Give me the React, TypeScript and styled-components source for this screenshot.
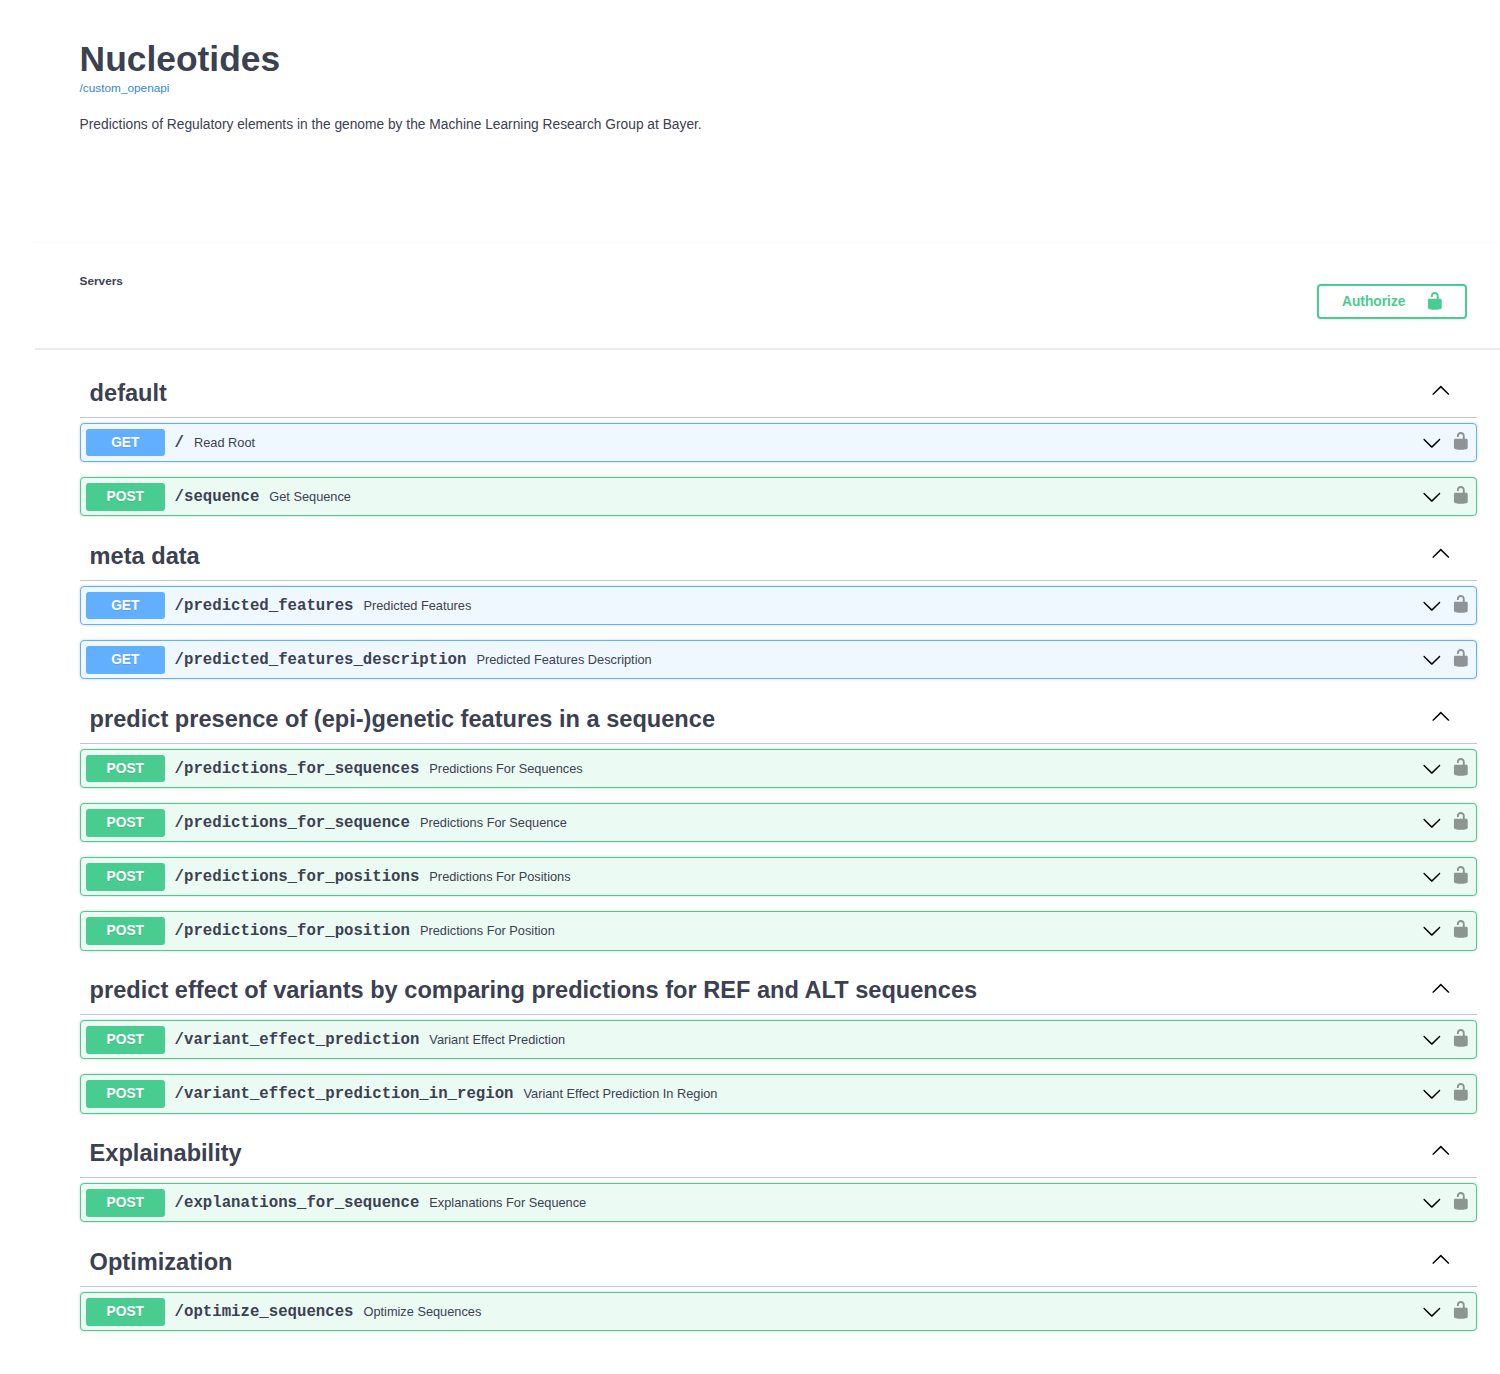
import React from "react";
import styled, { createGlobalStyle } from "styled-components";

const sans = `"Liberation Sans", Arial, Helvetica, sans-serif`;
const mono = `"Liberation Mono", "Courier New", monospace`;

const GlobalStyle = createGlobalStyle`
  *, *::before, *::after { box-sizing: border-box; }
  body { margin: 0; background: #fff; color: #3b4151; font-family: ${sans}; }
  h1, h2, p { margin: 0; }
`;

const Page = styled.main`
  height: 1374px;
  padding-left: 35px;
  overflow: hidden;
`;

const Info = styled.header`
  height: 242px;
  padding: 38px 0 0 44.6px;
  display: flex;
  flex-direction: column;
  align-items: flex-start;
`;

const Title = styled.h1`
  font-size: 35.4px;
  line-height: 42px;
  font-weight: 700;
`;

const SpecLink = styled.a`
  margin-top: 1px;
  color: #3486dd;
  font-size: 11.8px;
  line-height: 15px;
`;

const Description = styled.p`
  margin-top: 20px;
  font-size: 13.77px;
  line-height: 17px;
`;

const Schemes = styled.section`
  height: 108px;
  padding: 30px 33px 0 44.6px;
  display: flex;
  justify-content: space-between;
  align-items: flex-start;
  border-top: 1px solid #fafafa;
  border-bottom: 2px solid #ebebeb;
`;

const ServersLabel = styled.span`
  font-size: 11.8px;
  line-height: 16px;
  font-weight: 700;
`;

const AuthorizeButton = styled.button`
  width: 150px;
  height: 35.5px;
  margin-top: 10.5px;
  padding: 0 20px 0 23px;
  display: flex;
  align-items: center;
  justify-content: space-between;
  border: 2px solid #49cc90;
  border-radius: 4px;
  background: transparent;
  box-shadow: 0 1px 2px rgba(0, 0, 0, 0.1);
  color: #49cc90;
  font: 700 13.76px ${sans};
`;

const Sections = styled.div`
  padding: 13px 23px 0 45px;
`;

const SectionHead = styled.div`
  height: 54.8px;
  padding: 5.6px 26.1px 0 9.6px;
  display: flex;
  align-items: center;
  justify-content: space-between;
  border-bottom: 1px solid rgba(59, 65, 81, 0.3);
`;

const SectionTitle = styled.h2`
  font-size: 23.6px;
  line-height: 30px;
  font-weight: 700;
`;

const Rows = styled.div`
  padding-top: 5px;
  margin-bottom: -5px;
`;

type Method = "GET" | "POST";

const palette = {
  GET: { solid: "#61affe", tint: "#eff7ff" },
  POST: { solid: "#49cc90", tint: "#ebfaf3" },
};

const Row = styled.div<{ $method: Method }>`
  height: 39.5px;
  margin-bottom: 14.6px;
  padding: 0.3px 5.2px 0 5px;
  display: flex;
  align-items: center;
  border: 1px solid ${(p) => palette[p.$method].solid};
  border-radius: 4px;
  background: ${(p) => palette[p.$method].tint};
  box-shadow: 0 0 3px rgba(0, 0, 0, 0.19);
`;

const Badge = styled.span<{ $method: Method }>`
  width: 78.6px;
  height: 27.6px;
  border-radius: 3px;
  background: ${(p) => palette[p.$method].solid};
  color: #fff;
  font-size: 13.76px;
  line-height: 28px;
  font-weight: 700;
  text-align: center;
  text-shadow: 0 1px 0 rgba(0, 0, 0, 0.1);
`;

const Path = styled.span`
  margin-left: 10px;
  padding-top: 1px;
  font: 700 15.69px/20px ${mono};
`;

const Summary = styled.span`
  flex: 1;
  margin-left: 10px;
  padding-top: 0.6px;
  font-size: 12.78px;
  line-height: 16px;
`;

const Icon = styled.svg<{ $lift?: number }>`
  width: 19.66px;
  height: 19.66px;
  flex: none;
  margin-bottom: ${(p) => p.$lift ?? 0}px;
`;

const RowIcons = styled.span`
  display: flex;
  align-items: center;
  gap: 10px;
`;

const Up = () => (
  <Icon viewBox="0 0 20 20" $lift={5}>
    <path d="M17.418 14.908c.272.268.709.268.979 0s.271-.701 0-.969l-7.908-7.83c-.27-.268-.707-.268-.979 0l-7.908 7.83c-.27.268-.27.701 0 .969.271.268.709.268.979 0L10 7.767l7.418 7.141z" />
  </Icon>
);

const Down = () => (
  <Icon viewBox="0 0 20 20">
    <path d="M17.418 6.109c.272-.268.709-.268.979 0s.271.701 0 .969l-7.908 7.83c-.27.268-.707.268-.979 0l-7.908-7.83c-.27-.268-.27-.701 0-.969.271-.268.709-.268.979 0L10 13.25l7.418-7.141z" />
  </Icon>
);

const Unlock = ({ lift, faded }: { lift: number; faded?: boolean }) => (
  <Icon viewBox="0 0 20 20" $lift={lift} fill={faded ? "#000" : "#49cc90"} opacity={faded ? 0.4 : 1}>
    <path d="M15.8 8H14V5.6C14 2.703 12.665 1 10 1 7.334 1 6 2.703 6 5.6V6h2v-.801C8 3.754 8.797 3 10 3c1.203 0 2 .754 2 2.199V8H4c-.553 0-1 .646-1 1.199V17c0 .549.428 1.139.951 1.307l1.197.387C5.672 18.861 6.55 19 7.1 19h5.8c.549 0 1.428-.139 1.951-.307l1.196-.387c.524-.167.953-.757.953-1.306V9.199C17 8.646 16.352 8 15.8 8z" />
  </Icon>
);

const sections: { name: string; operations: [Method, string, string][] }[] = [
  {
    name: "default",
    operations: [
      ["GET", "/", "Read Root"],
      ["POST", "/sequence", "Get Sequence"],
    ],
  },
  {
    name: "meta data",
    operations: [
      ["GET", "/predicted_features", "Predicted Features"],
      ["GET", "/predicted_features_description", "Predicted Features Description"],
    ],
  },
  {
    name: "predict presence of (epi-)genetic features in a sequence",
    operations: [
      ["POST", "/predictions_for_sequences", "Predictions For Sequences"],
      ["POST", "/predictions_for_sequence", "Predictions For Sequence"],
      ["POST", "/predictions_for_positions", "Predictions For Positions"],
      ["POST", "/predictions_for_position", "Predictions For Position"],
    ],
  },
  {
    name: "predict effect of variants by comparing predictions for REF and ALT sequences",
    operations: [
      ["POST", "/variant_effect_prediction", "Variant Effect Prediction"],
      ["POST", "/variant_effect_prediction_in_region", "Variant Effect Prediction In Region"],
    ],
  },
  {
    name: "Explainability",
    operations: [["POST", "/explanations_for_sequence", "Explanations For Sequence"]],
  },
  {
    name: "Optimization",
    operations: [["POST", "/optimize_sequences", "Optimize Sequences"]],
  },
];

export default function App() {
  return (
    <Page>
      <GlobalStyle />
      <Info>
        <Title>Nucleotides</Title>
        <SpecLink>/custom_openapi</SpecLink>
        <Description>
          Predictions of Regulatory elements in the genome by the Machine Learning Research Group at Bayer.
        </Description>
      </Info>
      <Schemes>
        <ServersLabel>Servers</ServersLabel>
        <AuthorizeButton>
          Authorize
          <Unlock lift={1} />
        </AuthorizeButton>
      </Schemes>
      <Sections>
        {sections.map((section) => (
          <section key={section.name}>
            <SectionHead>
              <SectionTitle>{section.name}</SectionTitle>
              <Up />
            </SectionHead>
            <Rows>
              {section.operations.map(([method, path, summary]) => (
                <Row key={path} $method={method}>
                  <Badge $method={method}>{method}</Badge>
                  <Path>{path}</Path>
                  <Summary>{summary}</Summary>
                  <RowIcons>
                    <Down />
                    <Unlock lift={4} faded />
                  </RowIcons>
                </Row>
              ))}
            </Rows>
          </section>
        ))}
      </Sections>
    </Page>
  );
}
